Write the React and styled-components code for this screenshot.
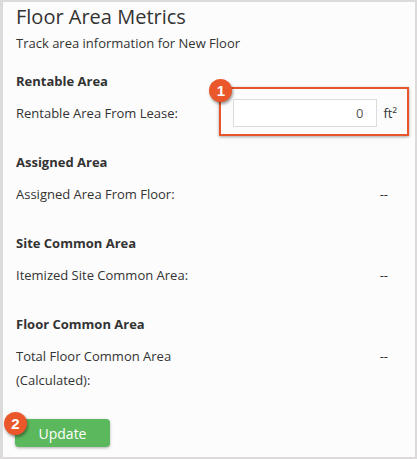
import React from "react";
import styled, { createGlobalStyle } from "styled-components";

const GlobalStyle = createGlobalStyle`
  html, body {
    margin: 0;
    padding: 0;
    background: #dcdada;
  }
  body {
    font-family: "Open Sans", "Liberation Sans", sans-serif;
    color: #333;
  }
  * {
    box-sizing: border-box;
  }
`;

const sections = [
  {
    title: "Rentable Area",
    label: "Rentable Area From Lease:",
    input: "0",
    unit: "ft²",
  },
  { title: "Assigned Area", label: "Assigned Area From Floor:", value: "--" },
  {
    title: "Site Common Area",
    label: "Itemized Site Common Area:",
    value: "--",
  },
  {
    title: "Floor Common Area",
    label: "Total Floor Common Area (Calculated):",
    value: "--",
  },
];

const App = () => {
  return (
    <>
      <GlobalStyle />
      <Frame>
        <Panel>
          <Title>Floor Area Metrics</Title>
          <Subtitle>Track area information for New Floor</Subtitle>

          {sections.map((s) => (
            <Section key={s.title}>
              <SectionTitle>{s.title}</SectionTitle>
              <Row>
                <Label>{s.label}</Label>
                {s.input !== undefined ? (
                  <InputGroup>
                    <Highlight>
                      <Badge $left={-12} $top={-10}>
                        1
                      </Badge>
                    </Highlight>
                    <AreaInput defaultValue={s.input} />
                    <Unit>{s.unit}</Unit>
                  </InputGroup>
                ) : (
                  <Value>{s.value}</Value>
                )}
              </Row>
            </Section>
          ))}

          <Footer>
            <UpdateButton type="button">
              <Badge $left={-11} $top={-7}>
                2
              </Badge>
              Update
            </UpdateButton>
          </Footer>
        </Panel>
      </Frame>
    </>
  );
};

const Frame = styled.div`
  width: 417px;
  height: 459px;
  border-style: solid;
  border-color: #dcdada;
  border-width: 2px 2px 2px 3px;
  background: #fcfcfc;
`;

const Panel = styled.div`
  padding: 1px 18px 0 13px;
`;

const Title = styled.h1`
  margin: 0;
  font-size: 20px;
  line-height: 28px;
  font-weight: 400;
  color: #333;
`;

const Subtitle = styled.p`
  margin: 2px 0 0;
  font-size: 13px;
  line-height: 20px;
  color: #333;
`;

const Section = styled.section`
  margin-top: 27px;

  &:first-of-type {
    margin-top: 18px;
  }
`;

const SectionTitle = styled.h2`
  margin: 0 0 10px;
  font-size: 13px;
  line-height: 20px;
  font-weight: 700;
  color: #333;
`;

const Row = styled.div`
  display: flex;
  align-items: baseline;
  justify-content: space-between;
`;

const Label = styled.div`
  max-width: 200px;
  font-size: 13px;
  line-height: 24px;
`;

const Value = styled.div`
  margin-right: 9px;
  font-size: 13px;
  line-height: 24px;
`;

const InputGroup = styled.div`
  position: relative;
  display: flex;
  align-items: baseline;
  gap: 6px;
`;

const Highlight = styled.div`
  position: absolute;
  left: -14px;
  right: -12px;
  top: -17px;
  bottom: -13px;
  border: 2px solid #e8552b;
  box-shadow: 0 1px 3px rgba(0, 0, 0, 0.35);
  pointer-events: none;
`;

const AreaInput = styled.input`
  width: 144px;
  height: 28px;
  margin: -5px 0 -4px;
  padding: 0 13px 0 6px;
  border: 1px solid #dcdcdc;
  background: #fff;
  font-family: inherit;
  font-size: 13px;
  color: #555;
  text-align: right;
  outline: none;
`;

const Unit = styled.span`
  font-size: 13px;
  color: #333;
`;

const Badge = styled.span`
  position: absolute;
  left: ${(p) => p.$left}px;
  top: ${(p) => p.$top}px;
  width: 23px;
  height: 23px;
  border-radius: 50%;
  background: #e9572a;
  color: #fff;
  font-family: "Liberation Sans", Arial, sans-serif;
  font-size: 15px;
  font-weight: 700;
  line-height: 23px;
  text-align: center;
  box-shadow: 1px 2px 3px rgba(0, 0, 0, 0.4);
`;

const Footer = styled.div`
  margin-top: 27px;
  margin-left: -1px;
`;

const UpdateButton = styled.button`
  position: relative;
  width: 95px;
  height: 28px;
  border: none;
  border-radius: 4px;
  background: #5cb85c;
  color: #fff;
  font-family: inherit;
  font-size: 14px;
  box-shadow: 0 1px 3px rgba(0, 0, 0, 0.3);
  cursor: pointer;
`;

export default App;
